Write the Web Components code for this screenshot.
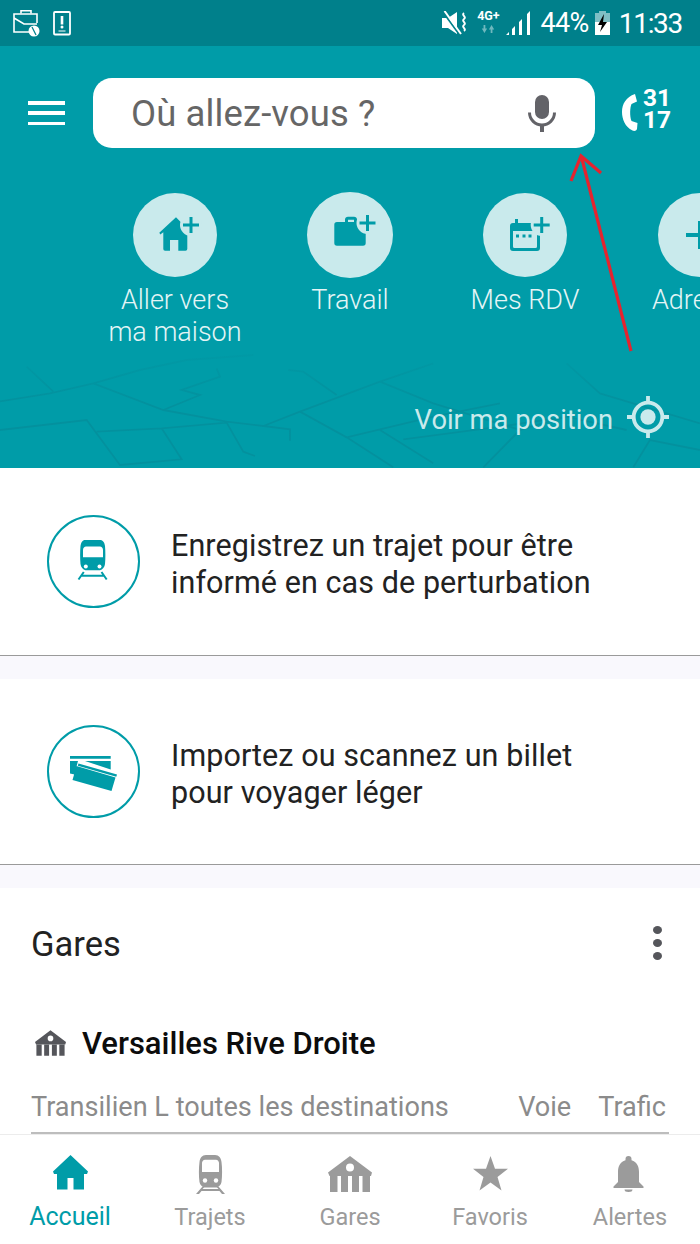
<!DOCTYPE html>
<html lang="fr"><head><meta charset="utf-8"><title>SNCF</title>
<style>
html,body{margin:0;padding:0;background:#fff}
body{width:700px;height:1244px;overflow:hidden;font-family:Roboto,"Liberation Sans",sans-serif}
</style></head><body>
<app-shell>
  <status-bar></status-bar>
  <hero-panel>
    <quick-action label="Aller vers<br>ma maison" icon="home" size="84"></quick-action>
    <quick-action label="Travail" icon="work" size="86"></quick-action>
    <quick-action label="Mes RDV" icon="cal" size="84"></quick-action>
    <quick-action label="Adresse" icon="plus" size="84"></quick-action>
  </hero-panel>
  <promo-card icon="train" h="188"><span>Enregistrez un trajet pour être<br>informé en cas de perturbation</span></promo-card>
  <promo-card icon="ticket" h="186"><span>Importez ou scannez un billet<br>pour voyager léger</span></promo-card>
  <stations-section></stations-section>
  <bottom-nav>
    <nav-item icon="home" label="Accueil" active></nav-item>
    <nav-item icon="train" label="Trajets"></nav-item>
    <nav-item icon="station" label="Gares"></nav-item>
    <nav-item icon="star" label="Favoris"></nav-item>
    <nav-item icon="bell" label="Alertes"></nav-item>
  </bottom-nav>
</app-shell>
<script>
const TEAL='#009ca8', PALE='#c9eaec';
const def=(name,html,extra)=>{customElements.define(name,class extends HTMLElement{
  connectedCallback(){ if(this.shadowRoot) return; const r=this.attachShadow({mode:'open'}); r.innerHTML=typeof html==='function'?html(this):html; extra&&extra(this,r);} });};

const plus=(cx,cy,a=8,t=3,bg=PALE,c=TEAL)=>`<circle cx="${cx}" cy="${cy}" r="${a+3}" fill="${bg}"/><path d="M${cx-a} ${cy}H${cx+a}M${cx} ${cy-a}V${cy+a}" stroke="${c}" stroke-width="${t}"/>`;
const QA={
 home:`<path fill="${TEAL}" d="M43 24.3 26.3 39.7l1 1.8 3-2.2V56a1.8 1.8 0 0 0 1.8 1.8H37V47h8.3v10.8h7.2a1.8 1.8 0 0 0 1.8-1.8V39.3l3 2.2 1-1.8z"/>`+plus(58,32),
 work:`<path fill="${TEAL}" d="M38 30v-2.6A3 3 0 0 1 41 24.7h6a3 3 0 0 1 3 2.7V30h6a2.7 2.7 0 0 1 2.7 2.7v18.3a2.7 2.7 0 0 1-2.7 2.7H30a2.7 2.7 0 0 1-2.7-2.7V32.700a2.700 2.700 0 0 1 2.700-2.700zM41 30h6v-2.300h-6z" fill-rule="evenodd"/>`+plus(60.500,31),
 cal:`<path fill="${TEAL}" fill-rule="evenodd" d="M32 26h3v4h14v-0l8 0v25a3 3 0 0 1-3 3H30a3 3 0 0 1-3-3V33a3 3 0 0 1 3-3h2zM30 38v15.500a1.500 1.500 0 0 0 1.500 1.500H52.500a1.500 1.500 0 0 0 1.500-1.500V38z"/><path fill="${TEAL}" d="M33 41.500h3v3h-3zM39.500 41.500h3v3h-3zM45.500 41.500h3v3h-3z"/>`+plus(58.700,32),
 plus:`<path d="M28 42H56M42 28V56" stroke="${TEAL}" stroke-width="4"/>`
};
const NAV={
 home:`<path d="M17.500 0 0 16.500 1 19h3v15.500h10.500V23h6v11.500H31V19h3l1-2.500z"/>`,
 train:`<path fill-rule="evenodd" d="M10 0h9c4 0 6 3 6.500 7 .8 6 .8 14 0 20-.4 2.800-2.500 5-5 5.500H8.500c-2.500-.5-4.600-2.700-5-5.500-.8-6-.8-14 0-20C4 3 6 0 10 0zM6 7.800v9.200h17V7.800c-.4-2-1.500-3-3-3H9c-1.500 0-2.600 1-3 3z"/><circle cx="9" cy="25.500" r="2.200" fill="#fff"/><circle cx="20" cy="25.500" r="2.200" fill="#fff"/><path d="M6.500 31.500 0 39h3l2.500-3h18l2.500 3h3l-6.500-7.500h-2.500l2.500 2.500H6.500L9 31.500z"/>`,
 station:`<g transform="translate(0 1)"><path fill-rule="evenodd" d="M22 0 0 16.500 1.500 20H43l1-3.500zM22 7.500a4 4 0 1 1 0 8 4 4 0 0 1 0-8z"/><path d="M2 20h7.500v16H2zM13 20h7v16h-7zM24 20h7v16h-7zM34.500 20H42v16h-7.500z" /></g>`,
 star:`<path transform="translate(0 1)" d="M17.500 0 22 12.800h13l-10.500 8.200 4 13.500-11-8-11 8 4-13.500L0 12.800h13z"/>`,
 bell:`<path transform="translate(0 1)" d="M15.500 0a3 3 0 0 1 3 3v1.300C24 6 26 10.500 26 16v10l4.500 4.500V32H.5v-1.500L5 26V16C5 10.500 7 6 12.500 4.300V3a3 3 0 0 1 3-3zM11.500 33.500h8a4 2.500 0 0 1-8 0z"/>`
};
const PROMO={
 train:`<path fill="${TEAL}" fill-rule="evenodd" d="M38 25h15c3 0 4.500 2.500 5 6 .5 5 .5 13 0 18-.3 3-2.500 5.500-5 6.300H38.500c-2.500-.8-4.700-3.300-5-6.300-.5-5-.5-13 0-18 .5-3.500 2-6 4.500-6zM36 42.300h20V35c0-2-1.500-3.500-3-3.500H39c-1.500 0-3 1.500-3 3.500z"/><circle cx="38.800" cy="51.500" r="2" fill="#fff"/><circle cx="52.500" cy="51.500" r="2" fill="#fff"/><path d="M31.500 64.500 36.800 57M59.700 64.500 54.500 57M34.500 60.800H56.700" stroke="${TEAL}" stroke-width="2" fill="none"/>`,
 ticket:`<path fill="${TEAL}" d="M23 31h40.700v2.700H23zM23 36h8l-3.500 13.500-4.500-1zM38 36h25.700v8.500zM31.500 38.500 70 49.500l-.7 2.300-38.500-11zM29.500 41l39 11.500-4 13.500-39-11z"/>`
};

def('app-shell',`<style>:host{display:flex;flex-direction:column;width:700px;height:1244px;position:relative;overflow:hidden;background:#fff;font-family:Roboto,"Liberation Sans",sans-serif}
svg{position:absolute;left:0;top:0;pointer-events:none;z-index:5}</style><slot></slot>
<svg width="700" height="400" viewBox="0 0 700 400" fill="none" stroke="#e6232e" stroke-width="3.200"><path d="M631 351 582 159"/><path d="M571 181 581 156 601 173" /></svg>`);

def('status-bar',`<style>
:host{display:flex;align-items:center;height:46px;background:#00808b;color:#fff;padding:0 18px 0 12px;box-sizing:border-box;flex:none}
.l{display:flex;align-items:center;gap:13px;flex:1}
.r{display:flex;align-items:center}
svg{display:block}
.p{font-size:27px;margin:0 6px 0 9px;letter-spacing:-.6px}
.t{font-size:28px;margin-left:9px;letter-spacing:-1.300px}
.g{display:flex;flex-direction:column;align-items:center;gap:4px;width:24px;margin:-4px 6px 0 9px;font-size:12.500px;font-weight:700;line-height:11px}
</style>
<div class="l">
<svg width="28" height="28" viewBox="0 0 28 28" fill="none" stroke="#fff" stroke-width="1.600"><path d="M9 4.500V1.800h10v2.700"/><path d="M2 9V5h23v9M2 9v14h16M2 9l10 6h13"/><circle cx="22" cy="22" r="5.500" fill="#fff" stroke="none"/><path d="M20 18l4 8" stroke="#00808b" stroke-width="1.200"/></svg>
<svg width="18" height="25" viewBox="0 0 18 25" fill="none"><rect x="1" y="1" width="16" height="22.500" rx="1" stroke="#fff" stroke-width="1.800"/><path d="M9 5v8.500" stroke="#fff" stroke-width="2.600"/><circle cx="9" cy="16" r="1.500" fill="#fff"/><path d="M5.500 20h7" stroke="#fff" stroke-width="1"/></svg>
</div>
<div class="r">
<svg width="26" height="24" viewBox="0 0 26 24"><path fill="#fff" d="M1 7h6l9-6v22l-9-6H1z"/><path d="M2 1 18 23" stroke="#00808b" stroke-width="2"/><path d="M3.500 0 20 23" stroke="#fff" stroke-width="2"/><path d="M23 2c-3 2 3 4 0 6s3 4 0 6 3 4 0 6" stroke="#fff" stroke-width="2" fill="none"/></svg>
<div class="g">4G+<svg width="14" height="8" viewBox="0 0 14 9" fill="#6fb8be"><path d="M2 0h2v4h2L3 9 0 4h2zM10 9h2V5h2L11 0 8 5h2z"/></svg></div>
<svg width="25" height="24" viewBox="0 0 25 24" fill="#fff"><path d="M0 24 3 21v3zM6 24v-6l3-3v9zM13 24V11l3-3v16zM21 24V3l3-3v24z"/></svg>
<span class="p">44%</span>
<svg width="15" height="24" viewBox="0 0 15 24"><path fill="#7fbfc5" d="M0 2h4V0h7v2h4v11H0z"/><path fill="#fff" d="M0 11h15v13H0z"/><path fill="#000" d="M9 3 3 14h4l-2 7 7-10H8z"/></svg>
<span class="t">11:33</span>
</div>`);

def('hero-panel',`<style>
:host{display:block;flex:none;height:422px;background:${TEAL};position:relative;overflow:hidden;box-sizing:border-box}
.map{position:absolute;left:0;bottom:0}
.top{display:flex;align-items:center;padding:32px 0 0 28px;position:relative}
.burger{width:37px;height:24px;display:flex;flex-direction:column;justify-content:space-between;margin-right:28px}
.burger i{display:block;height:3.500px;background:#fff}
.search{flex:none;width:502px;height:70px;background:#fff;border-radius:19px;display:flex;align-items:center;padding:0 39px 0 38px;box-sizing:border-box;justify-content:space-between;color:#666;font-size:36.500px;letter-spacing:.1px}
.phone{margin-left:27px;display:flex;align-items:center}
.num{font-weight:700;font-size:24.500px;line-height:22px;color:#fff;margin:0 0 8px 4px;letter-spacing:-.1px;display:block}
.row{display:flex;padding:45px 0 0 87.500px;position:relative;width:900px}
.pos{position:absolute;right:31px;top:350px;display:flex;align-items:center;gap:14px;color:${PALE};font-size:27.300px;font-weight:400}
.pos span{padding-top:6px}
</style>
<svg class="map" width="700" height="118" viewBox="0 0 700 118" fill="none">
<defs><linearGradient id="f" x1="0" y1="0" x2="0" y2="1"><stop offset="0" stop-color="#03919e" stop-opacity=".25"/><stop offset=".45" stop-color="#03919e"/><stop offset="1" stop-color="#03919e"/></linearGradient></defs>
<g transform="scale(.3333)" stroke-width="5.500" stroke="url(#f)">
<path d="M0 154 150 130 280 100 420 60 560 30 760 15M80 50 160 125M280 100 490 180 680 215 790 228 870 238V272M490 180 600 135 545 120 660 80 650 55M0 240 260 210 360 345 545 328 485 235M290 245 485 235 680 218 730 305 765 318M790 228 900 185 1140 95 1300 40M865 60 910 65 1010 135M900 185 1040 262 1180 352M1040 262 1300 200 1500 160M1140 95 1300 160 1560 240M1140 240 1300 340M1210 268 1500 230 1700 200M1700 40 1800 130 2100 220M1560 240 1700 200 1880 240M1450 352 1560 240M1900 352 1950 270 2100 300" gradientUnits="userSpaceOnUse"/>
</g></svg>
<div class="top">
<div class="burger"><i></i><i></i><i></i></div>
<div class="search"><span>Où allez-vous ?</span>
<svg width="28" height="37" viewBox="0 0 28 37"><rect x="7" y="0" width="14" height="24" rx="7" fill="#636368"/><path d="M1.500 17.500a12.500 12.500 0 0 0 25 0" fill="none" stroke="#636368" stroke-width="3"/><path d="M14 29v8" stroke="#636368" stroke-width="4"/></svg></div>
<div class="phone"><svg width="17" height="38" viewBox="0 0 17 38"><path fill="#fff" d="M13 0 15 7.500 9.500 10C8 13 7.500 22 9.500 27L15.500 29 15 35C14.500 37 12 37.500 10.500 36.500 3 33 0 25 0 18 0 10 4 3 13 0z"/></svg><span class="num">31<br>17</span></div>
</div>
<div class="row"><slot></slot></div>
<div class="pos"><span>Voir ma position</span>
<svg width="42" height="42" viewBox="0 0 44 44" fill="none"><circle cx="22" cy="22" r="15" stroke="${PALE}" stroke-width="4"/><circle cx="22" cy="22" r="8" fill="${PALE}"/><path d="M22 0v7M22 37v7M0 22h7M37 22h7" stroke="${PALE}" stroke-width="4"/></svg></div>`);

def('quick-action',h=>{const s=h.getAttribute('size');return `<style>
:host{display:flex;flex-direction:column;align-items:center;width:175px;flex:none;color:#e4f5f6}
.c{width:${s}px;height:${s}px;border-radius:50%;background:${PALE};margin-bottom:${s==86?6:7}px;margin-top:${s==86?-1:0}px}
svg{display:block}
.t{font-size:27px;line-height:32px;font-weight:300;text-align:center;white-space:nowrap}
</style><div class="c"><svg width="${s}" height="${s}" viewBox="0 0 ${s} ${s}">${QA[h.getAttribute('icon')]}</svg></div><div class="t">${h.getAttribute('label')}</div>`});

def('promo-card',h=>`<style>
:host{display:flex;align-items:center;flex:none;height:${h.getAttribute('h')}px;box-sizing:border-box;padding:0 0 0 47px;background:#fff;border-bottom:1px solid #9a9a9a;color:#222;margin-bottom:23px;box-shadow:0 23px 0 #f9f8fd;position:relative}
.c{width:93px;height:93px;flex:none;margin-right:31px}
svg{display:block}
.t{font-size:30.500px;line-height:37px;color:#222;font-weight:400;letter-spacing:.08px;padding-top:4px}
</style><div class="c"><svg width="93" height="93" viewBox="0 0 93 93"><circle cx="46.500" cy="46.500" r="45.500" fill="none" stroke="${TEAL}" stroke-width="2"/>${PROMO[h.getAttribute('icon')]}</svg></div><div class="t"><slot></slot></div>`);

def('stations-section',`<style>
:host{display:block;flex:1;min-height:0;overflow:hidden;background:#fff;padding:0 31px;color:#222;position:relative;z-index:1}
.h{display:flex;justify-content:space-between;align-items:center;height:137px;box-sizing:border-box;padding:0 0 25px 0;font-size:34.500px;color:#222;font-weight:400}
.d{display:flex;flex-direction:column;gap:5px;margin-right:7px;margin-top:-3px}
.d i{width:9px;height:8px;border-radius:50%;background:#55565b;display:block}
.s{display:flex;align-items:center;font-size:31px;font-weight:500;color:#0c0c0c;height:36px;padding-left:4px}
.s svg{margin-right:16px}
.r{display:flex;margin-top:27px;height:46px;box-sizing:border-box;padding-top:3px;border-bottom:2px solid #bdbdbd;color:#8b8b8b;font-size:27.100px;line-height:32px;white-space:nowrap}
.r .a{flex:1}.r .b{margin-right:27px}.r .c{margin-right:3px}
</style>
<div class="h"><span>Gares</span><div class="d"><i></i><i></i><i></i></div></div>
<div class="s"><svg width="31" height="26" viewBox="0 0 44 36" fill="#55565b"><path fill-rule="evenodd" d="M22 0 0 16.500 1.500 20H43l1-3.500zM22 7.500a4 4 0 1 1 0 8 4 4 0 0 1 0-8z"/><path d="M2 20h7.500v16H2zM13 20h7v16h-7zM24 20h7v16h-7zM34.500 20H42v16h-7.500z"/></svg>Versailles Rive Droite</div>
<div class="r"><span class="a">Transilien L toutes les destinations</span><span class="b">Voie</span><span class="c">Trafic</span></div>`);

def('bottom-nav',`<style>:host{display:flex;flex:none;height:110px;background:#fff;border-top:1px solid #ececec;box-sizing:border-box;position:relative;z-index:2}</style><slot></slot>`);

def('nav-item',h=>{const a=h.hasAttribute('active');const c=a?TEAL:'#9b9b9b';const ic=h.getAttribute('icon');const w=ic=='station'?44:ic=='train'?29:35;const vh=ic=='train'?40:37;return `<style>
:host{display:flex;flex-direction:column;align-items:center;width:140px;flex:none;color:${c}}
.i{height:37px;margin-top:20px;display:flex;align-items:flex-start;justify-content:center}
svg{display:block;fill:${c}}
.t{font-size:${a?25:23.5}px;line-height:28px;margin-top:11px;font-weight:400}
</style><div class="i"><svg width="${w}" height="${vh}" viewBox="0 0 ${w} ${vh}">${NAV[ic]}</svg></div><div class="t">${h.getAttribute('label')}</div>`});
</script>
</body></html>
